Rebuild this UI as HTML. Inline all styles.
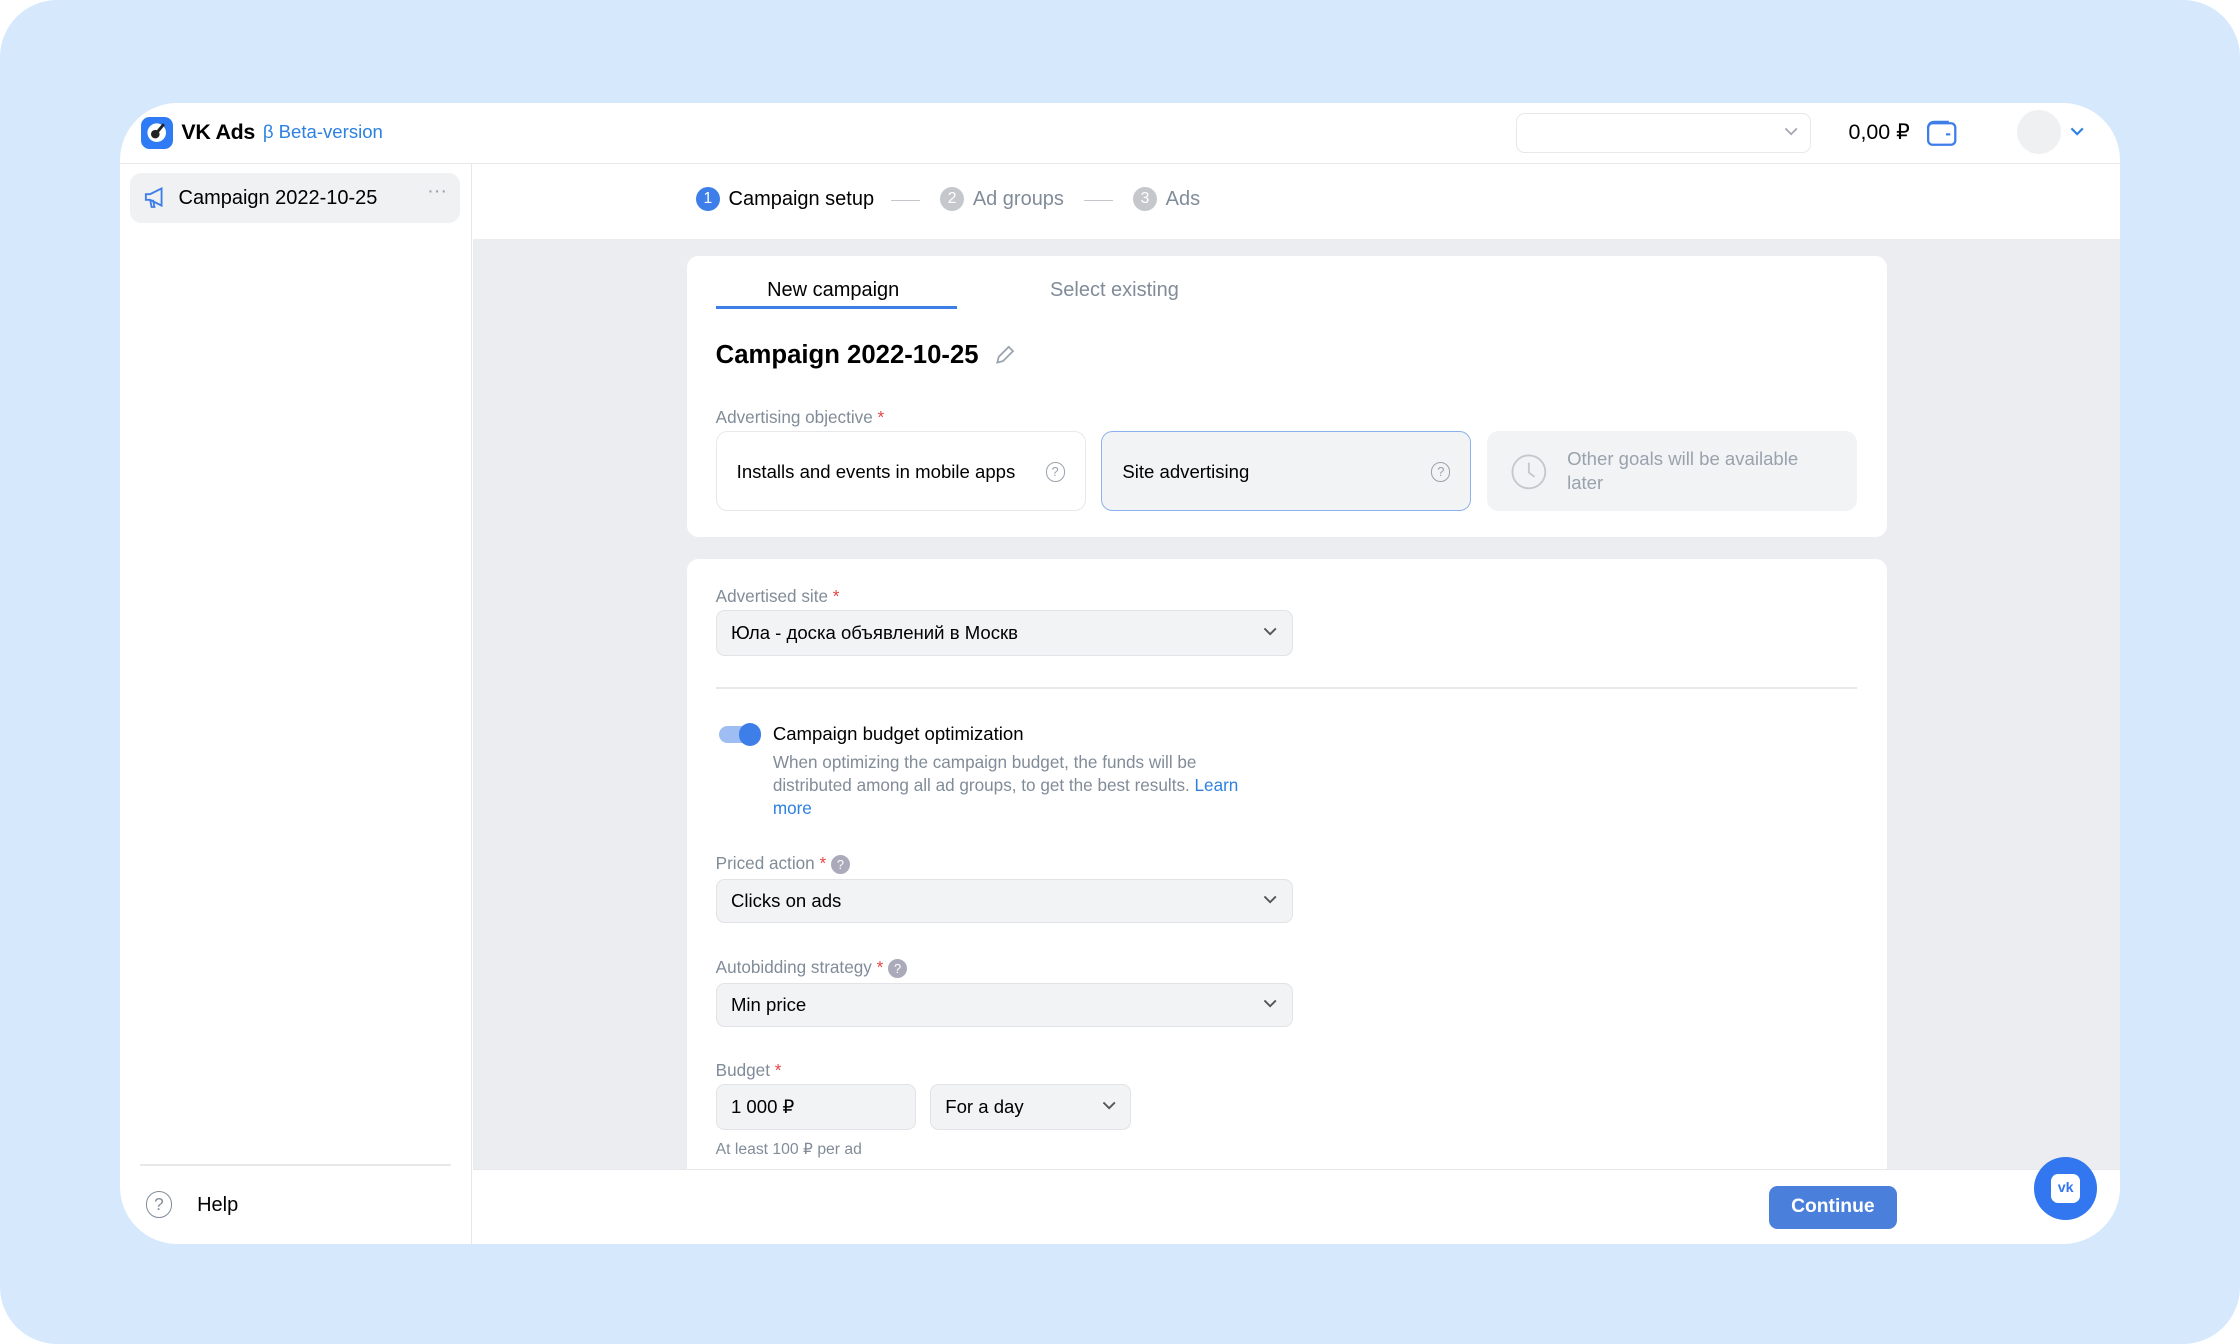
<!DOCTYPE html>
<html><head><meta charset="utf-8"><style>
html,body{margin:0;padding:0}
body{width:1568px;height:941px;zoom:1.428571;background:#fff;font-family:"Liberation Sans",sans-serif;overflow:hidden;position:relative;color:#000}
.bg{position:absolute;left:0;top:0;width:1568px;height:941px;background:#d5e8fc;border-radius:40px}
.win{position:absolute;left:84px;top:72px;width:1400px;height:799px;background:#fff;border-radius:40px;overflow:hidden}
.abs{position:absolute}
.hdr{left:0;top:0;width:1400px;height:42px;border-bottom:1px solid #e7e8ea}
.side{left:0;top:43px;width:246px;height:756px;border-right:1px solid #e7e8ea}
.main{left:247px;top:95px;width:1153px;height:651px;background:#ebedf0}
.card{background:#fff;border-radius:8px;position:absolute}
.lbl{font-size:12px;color:#818c99;position:absolute}
.star{color:#e64646}
.sel{position:absolute;background:#f2f3f5;border:1px solid #e1e3e6;border-radius:6px;box-sizing:border-box;font-size:14px;padding:0 10px;display:flex;align-items:center}
.chev{position:absolute;right:10px;top:50%;margin-top:-4px}
.step{position:absolute;font-size:14px;display:flex;align-items:center;gap:6px}
.num{width:17px;height:17px;border-radius:50%;color:#fff;font-size:11px;display:flex;align-items:center;justify-content:center}
.q{display:inline-flex;width:12px;height:12px;border-radius:50%;border:1px solid #99a2ad;color:#99a2ad;font-size:9px;align-items:center;justify-content:center}
</style></head><body>
<div class="bg"></div>
<div class="win">
 <div class="abs hdr">
  <div class="abs" style="left:15px;top:10px;width:22px;height:22px;border-radius:6px;background:#2f7bf5">
   <svg width="22" height="22"><circle cx="11" cy="11" r="6.5" fill="#fff"/><circle cx="10" cy="12" r="3" fill="#222"/><path d="M11 11 L16 5" stroke="#222" stroke-width="2"/></svg>
  </div>
  <div class="abs" style="left:43px;top:12px;font-size:15px;font-weight:600;letter-spacing:-0.2px">VK Ads</div>
  <div class="abs" style="left:100px;top:13px;font-size:13px;color:#2d81e0">β Beta-version</div>
  <div class="abs" style="left:977px;top:7px;width:205px;height:27px;border:1px solid #e7e8ea;border-radius:6px"><svg class="chev" style="right:8px" width="10" height="7"><path d="M1 1l4 4 4-4" stroke="#aab" fill="none" stroke-width="1.3"/></svg></div>
  <div class="abs" style="left:1210px;top:12px;font-size:15px">0,00 ₽</div>
  <svg class="abs" style="left:1264px;top:11px" width="22" height="20"><rect x="1.5" y="3" width="19" height="15" rx="3" fill="none" stroke="#3d7ee8" stroke-width="1.6"/><path d="M1.5 6 Q2 2 6 2 H16" fill="none" stroke="#3d7ee8" stroke-width="1.6"/><rect x="14" y="10" width="3" height="1.5" fill="#3d7ee8"/></svg>
  <div class="abs" style="left:1328px;top:5px;width:31px;height:31px;border-radius:50%;background:#eff0f2"></div>
  <svg class="abs" style="left:1365px;top:17px" width="10" height="7"><path d="M1 1l4 4 4-4" stroke="#2d81e0" fill="none" stroke-width="1.5"/></svg>
 </div>
 <div class="abs side">
  <div class="abs" style="left:7px;top:6px;width:231px;height:35px;background:#f0f1f3;border-radius:8px">
   <svg class="abs" style="left:9px;top:10px" width="17" height="15"><path d="M2 5h3l8-4v12l-8-4H2z M5 9l1 5h2l-1-5" fill="none" stroke="#3d7ee8" stroke-width="1.3"/></svg>
   <div class="abs" style="left:34px;top:10px;font-size:14px">Campaign 2022-10-25</div>
   <div class="abs" style="left:208px;top:5px;font-size:14px;color:#99a2ad">···</div>
  </div>
  <div class="abs" style="left:14px;top:700px;width:218px;height:1px;background:#e7e8ea"></div>
  <div class="abs" style="left:18px;top:719px;width:17px;height:17px;border-radius:50%;border:1.3px solid #818c99;color:#818c99;font-size:12px;text-align:center;line-height:17px">?</div>
  <div class="abs" style="left:54px;top:721px;font-size:14px">Help</div>
 </div>
 <div class="step" style="left:403px;top:59px"><div class="num" style="background:#3d7ee8">1</div>Campaign setup</div>
 <div class="abs" style="left:540px;top:68px;width:20px;height:1px;background:#c4c8cc"></div>
 <div class="step" style="left:574px;top:59px;color:#818c99"><div class="num" style="background:#c4c8cc">2</div>Ad groups</div>
 <div class="abs" style="left:675px;top:68px;width:20px;height:1px;background:#c4c8cc"></div>
 <div class="step" style="left:709px;top:59px;color:#818c99"><div class="num" style="background:#c4c8cc">3</div>Ads</div>
 <div class="abs main">
  <div class="card" style="left:150px;top:12px;width:840px;height:197px">
   <div class="abs" style="left:56px;top:16px;font-size:14px">New campaign</div>
   <div class="abs" style="left:20px;top:35px;width:169px;height:2px;background:#3d7ee8"></div>
   <div class="abs" style="left:254px;top:16px;font-size:14px;color:#818c99">Select existing</div>
   <div class="abs" style="left:20px;top:60px;font-size:18px;font-weight:bold">Campaign 2022-10-25</div>
   <svg class="abs" style="left:214px;top:62px" width="16" height="16"><path d="M3 13l1-4 7-7 3 3-7 7z" fill="none" stroke="#99a2ad" stroke-width="1.2"/></svg>
   <div class="lbl" style="left:20px;top:106px">Advertising objective <span class="star">*</span></div>
   <div class="abs" style="left:20px;top:123px;width:259px;height:56px;border:1px solid #e7e8ea;border-radius:8px;box-sizing:border-box;font-size:13px;padding:20px 14px">Installs and events in mobile apps <span class="q" style="position:absolute;right:14px;top:21px">?</span></div>
   <div class="abs" style="left:290px;top:123px;width:259px;height:56px;border:1px solid #8ab1ee;background:#f2f3f5;border-radius:8px;box-sizing:border-box;font-size:13px;padding:20px 14px">Site advertising <span class="q" style="position:absolute;right:14px;top:21px">?</span></div>
   <div class="abs" style="left:560px;top:123px;width:259px;height:56px;background:#f2f3f5;border-radius:8px;box-sizing:border-box;font-size:13px;color:#99a2ad">
    <svg class="abs" style="left:17px;top:16px" width="25" height="25"><circle cx="12.5" cy="12.5" r="11.5" fill="none" stroke="#c4c8cc" stroke-width="1.3"/><path d="M12.5 6v7l4 3" fill="none" stroke="#c4c8cc" stroke-width="1.3"/></svg>
    <div class="abs" style="left:56px;top:11px;width:190px;line-height:17px">Other goals will be available later</div>
   </div>
  </div>
  <div class="card" style="left:150px;top:224px;width:840px;height:440px">
   <div class="lbl" style="left:20px;top:19px">Advertised site <span class="star">*</span></div>
   <div class="sel" style="left:20px;top:36px;width:404px;height:32px;font-size:13px">Юла - доска объявлений в Москв<svg class="chev" width="10" height="7"><path d="M1 1l4 4 4-4" stroke="#555" fill="none" stroke-width="1.3"/></svg></div>
   <div class="abs" style="left:20px;top:90px;width:799px;height:1px;background:#e7e8ea"></div>
   <div class="abs" style="left:22px;top:117px;width:28px;height:12px;border-radius:6px;background:#9dbdf3"></div>
   <div class="abs" style="left:36px;top:115px;width:16px;height:16px;border-radius:50%;background:#3d7ee8"></div>
   <div class="abs" style="left:60px;top:115px;font-size:13px">Campaign budget optimization</div>
   <div class="abs" style="left:60px;top:135px;width:352px;font-size:12px;line-height:16px;color:#818c99">When optimizing the campaign budget, the funds will be distributed among all ad groups, to get the best results. <span style="color:#2d81e0">Learn more</span></div>
   <div class="lbl" style="left:20px;top:206px">Priced action <span class="star">*</span> <span class="q" style="background:#aab;color:#fff;border-color:#aab">?</span></div>
   <div class="sel" style="left:20px;top:224px;width:404px;height:31px;font-size:13px">Clicks on ads<svg class="chev" width="10" height="7"><path d="M1 1l4 4 4-4" stroke="#555" fill="none" stroke-width="1.3"/></svg></div>
   <div class="lbl" style="left:20px;top:279px">Autobidding strategy <span class="star">*</span> <span class="q" style="background:#aab;color:#fff;border-color:#aab">?</span></div>
   <div class="sel" style="left:20px;top:297px;width:404px;height:31px;font-size:13px">Min price<svg class="chev" width="10" height="7"><path d="M1 1l4 4 4-4" stroke="#555" fill="none" stroke-width="1.3"/></svg></div>
   <div class="lbl" style="left:20px;top:351px">Budget <span class="star">*</span></div>
   <div class="sel" style="left:20px;top:368px;width:140px;height:32px;font-size:13px">1 000 ₽</div>
   <div class="sel" style="left:170px;top:368px;width:141px;height:32px;font-size:13px">For a day<svg class="chev" width="10" height="7"><path d="M1 1l4 4 4-4" stroke="#555" fill="none" stroke-width="1.3"/></svg></div>
   <div class="lbl" style="left:20px;top:406px;font-size:11px">At least 100 ₽ per ad</div>
  </div>
 </div>
 <div class="abs" style="left:247px;top:746px;width:1153px;height:53px;background:#fff;border-top:1px solid #e7e8ea"></div>
 <div class="abs" style="left:1154px;top:758px;width:90px;height:30px;background:#4a7fdc;border-radius:6px;color:#fff;font-size:13.5px;font-weight:bold;text-align:center;line-height:30px">Continue</div>
 <div class="abs" style="left:1340px;top:738px;width:44px;height:44px;border-radius:50%;background:#3276f0">
  <div class="abs" style="left:12px;top:12px;width:20px;height:20px;border-radius:5px;background:#fff;color:#3276f0;font-size:10px;font-weight:bold;text-align:center;line-height:20px">vk</div>
 </div>
</div>
</body></html>
